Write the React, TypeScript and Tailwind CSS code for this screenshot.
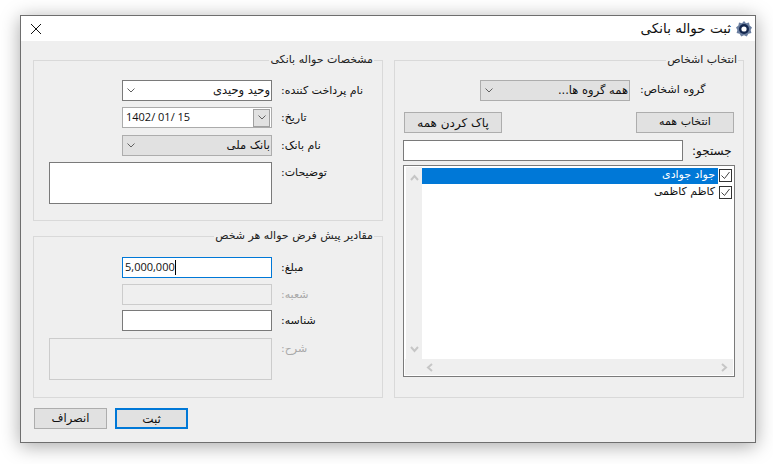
import type { ReactNode } from 'react'

const FA = "font-['DejaVu_Sans','Noto_Sans',sans-serif]"

function Chevron() {
  return (
    <svg viewBox="0 0 8 5" className="w-[8px] h-[5px] text-[#606060]" fill="none" stroke="currentColor" strokeWidth="1">
      <path d="M0.5 0.5 L4 4 L7.5 0.5" />
    </svg>
  )
}

function ScrollArrow({ rotate }: { rotate: string }) {
  return (
    <svg viewBox="0 0 9 7" className={`w-[9px] h-[7px] text-[#c6c6c6] ${rotate}`} fill="none" stroke="currentColor" strokeWidth="2">
      <path d="M1 6 L4.5 2 L8 6" />
    </svg>
  )
}

function Logo() {
  return (
    <svg viewBox="0 0 16 16" className="w-4 h-4">
      <path
        d="M8 0 L10 2.2 L13 1.6 L13.6 4.6 L16 6.4 L14.6 9 L15.4 12 L12.4 12.8 L10.8 15.4 L8 14.2 L5.2 15.4 L3.6 12.8 L0.6 12 L1.4 9 L0 6.4 L2.4 4.6 L3 1.6 L6 2.2 Z"
        fill="#6b7fa0"
      />
      <circle cx="8" cy="8" r="5" fill="#14284f" />
      <circle cx="8" cy="8" r="2.6" fill="#ffffff" />
    </svg>
  )
}

function Group({ title, className, legendClass = 'right-[8px]', children }: { title: string; className: string; legendClass?: string; children: ReactNode }) {
  return (
    <section className={`relative border border-[#d9d9d9] ${className}`}>
      <span dir="rtl" className={`absolute -top-[8px] ${legendClass} bg-[#efefef] px-[1px] text-[11px] leading-[14px] text-[#222]`}>
        {title}
      </span>
      {children}
    </section>
  )
}

function Row({ label, disabled, children, className = 'mb-[6px]' }: { label: string; disabled?: boolean; children: ReactNode; className?: string }) {
  return (
    <div className={`flex justify-end ${className}`}>
      {children}
      <div className={`w-[110px] h-[21px] pl-[9px] flex items-center text-[11px] leading-[16px] ${disabled ? 'text-[#a8a8a8]' : 'text-[#111]'}`}>
        <span dir="rtl">{label}</span>
      </div>
    </div>
  )
}

function SelectBox({ text, className }: { text: string; className: string }) {
  return (
    <div className={`w-[150px] h-[21px] border flex items-center justify-between pl-[4px] pr-[1px] ${className}`}>
      <Chevron />
      <span dir="rtl" className="text-[11.5px] text-[#111]">{text}</span>
    </div>
  )
}

function Btn({ text, className }: { text: string; className: string }) {
  return (
    <button className={`h-[21px] bg-[#e1e1e1] border border-[#adadad] flex items-center justify-center text-[#111] ${className}`}>
      <span dir="rtl">{text}</span>
    </button>
  )
}

function PersonRow({ name, selected }: { name: string; selected?: boolean }) {
  return (
    <div className="flex h-[17px] items-center">
      <div className={`w-[296px] h-[16px] flex items-center justify-end pr-[3px] ${selected ? 'bg-[#0078d7] text-white' : 'text-[#111]'}`}>
        <span dir="rtl" className="text-[11px]">{name}</span>
      </div>
      <div className="ml-[1px] w-[13px] h-[13px] border border-[#333] bg-white flex items-center justify-center">
        <svg viewBox="0 0 11 11" className="w-[11px] h-[11px]" fill="none" stroke="#444" strokeWidth="1">
          <path d="M1.5 5.5 L4.5 8.5 L9.5 2" />
        </svg>
      </div>
    </div>
  )
}

export default function App() {
  return (
    <div className={`w-[773px] h-[464px] bg-white pl-[20px] pt-[15px] overflow-hidden ${FA}`}>
      <div className="w-[736px] h-[428px] border border-[#6e6e6e] shadow-[0_3px_18px_rgba(0,0,0,0.35)] flex flex-col">
        {/* Title bar */}
        <div className="h-[25px] bg-white flex items-center justify-between pl-[10px] pr-[3px] shrink-0">
          <svg viewBox="0 0 10 10" className="w-[10px] h-[10px]" fill="none" stroke="#111" strokeWidth="1">
            <path d="M0 0 L10 10 M10 0 L0 10" />
          </svg>
          <div className="flex items-center gap-[5px]">
            <span dir="rtl" className="text-[13.5px] text-[#111]">ثبت حواله بانکی</span>
            <Logo />
          </div>
        </div>

        <div className="flex-1 bg-[#efefef] pl-[12px] pt-[19px]">
          <div className="flex gap-[11px]">
            {/* Left column */}
            <div className="w-[350px] flex flex-col gap-[15px]">
              <Group title="مشخصات حواله بانکی" className="h-[161px] pt-[19px]">
                <Row label="نام پرداخت کننده:">
                  <SelectBox text="وحید وحیدی" className="bg-white border-[#7a7a7a]" />
                </Row>
                <Row label="تاریخ:" className="mb-[7px]">
                  <div className="w-[150px] h-[21px] border border-[#ababab] bg-white flex items-center justify-between pl-[3px] pr-[1px]">
                    <span className="font-['Open_Sans',sans-serif] text-[11px] text-[#111]">1402/ 01/ 15</span>
                    <div className="w-[17px] h-[18px] bg-[#e1e1e1] border border-[#a0a0a0] flex items-center justify-center">
                      <Chevron />
                    </div>
                  </div>
                </Row>
                <Row label="نام بانک:">
                  <SelectBox text="بانک ملی" className="bg-[#e1e1e1] border-[#adadad]" />
                </Row>
                <Row label="توضیحات:" className="">
                  <div className="w-[223px] h-[42px] bg-white border border-[#7a7a7a]" />
                </Row>
              </Group>

              <Group title="مقادیر پیش فرض حواله هر شخص" className="h-[162px] pt-[20px]">
                <Row label="مبلغ:">
                  <div className="w-[150px] h-[21px] bg-white border border-[#0078d7] flex items-center pl-[2px]">
                    <span className="font-['Open_Sans',sans-serif] text-[11px] text-[#111]">5,000,000</span>
                    <span className="w-px h-[15px] bg-black" />
                  </div>
                </Row>
                <Row label="شعبه:" disabled className="mb-[5px]">
                  <div className="w-[150px] h-[21px] bg-[#efefef] border border-[#cccccc]" />
                </Row>
                <Row label="شناسه:" className="mb-[7px]">
                  <div className="w-[150px] h-[21px] bg-white border border-[#7a7a7a]" />
                </Row>
                <Row label="شرح:" disabled className="">
                  <div className="w-[223px] h-[42px] bg-[#efefef] border border-[#cccccc]" />
                </Row>
              </Group>
            </div>

            {/* Right column */}
            <Group title="انتخاب اشخاص" legendClass="right-[5px]" className="w-[350px] h-[338px] pt-[19px] pl-[8px] pr-[8px]">
              <div className="flex ml-[77px] mb-[11px]">
                <SelectBox text="همه گروه ها..." className="bg-[#e1e1e1] border-[#adadad]" />
                <span dir="rtl" className="ml-[10px] pt-[2px] text-[11px] leading-[16px] text-[#111]">گروه اشخاص:</span>
              </div>
              <div className="flex justify-between pl-[1px] pr-[1px] mb-[7px]">
                <Btn text="پاک کردن همه" className="w-[98px] text-[12px]" />
                <Btn text="انتخاب همه" className="w-[98px] text-[11px]" />
              </div>
              <div className="flex mb-[4px]">
                <input className="w-[280px] h-[21px] bg-white border border-[#7a7a7a] outline-none" />
                <span dir="rtl" className="ml-[9px] pt-[3px] text-[12px] leading-[16px] text-[#111]">جستجو:</span>
              </div>
              <div className="w-[332px] h-[212px] border border-[#7a7a7a] bg-white flex flex-col p-[1px]">
                <div className="flex flex-1 min-h-0">
                  <div className="w-[16px] bg-[#efefef] flex flex-col items-center justify-between pt-[7px] pb-[6px] ml-[1px]">
                    <ScrollArrow rotate="" />
                    <ScrollArrow rotate="rotate-180" />
                  </div>
                  <div className="flex-1">
                    <PersonRow name="جواد جوادی" selected />
                    <PersonRow name="کاظم کاظمی" />
                  </div>
                </div>
                <div className="h-[16px] bg-[#efefef] flex items-center justify-between pl-[20px] pr-[4px] shrink-0">
                  <ScrollArrow rotate="-rotate-90" />
                  <ScrollArrow rotate="rotate-90" />
                </div>
              </div>
            </Group>
          </div>

          <div className="flex gap-[8px] pl-[1px] mt-[10px]">
            <Btn text="انصراف" className="w-[73px] text-[11.5px]" />
            <button className="w-[73px] h-[21px] bg-[#e1e1e1] border-2 border-[#0078d7] flex items-center justify-center text-[12px] text-[#111]">
              <span dir="rtl">ثبت</span>
            </button>
          </div>
        </div>
      </div>
    </div>
  )
}
